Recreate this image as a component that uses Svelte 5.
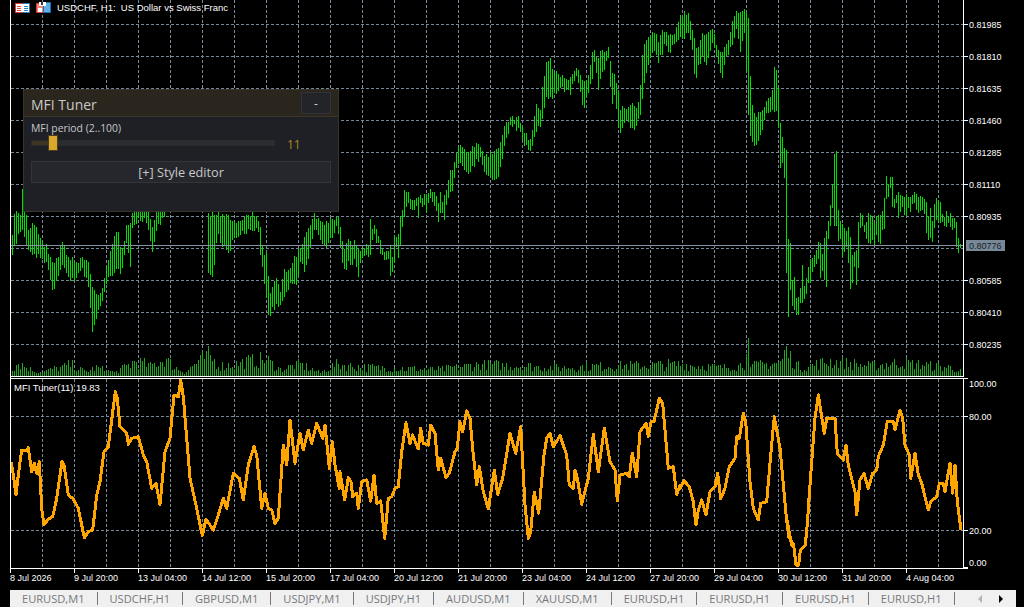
<script>
  // chart geometry
  const vGrid = Array.from({ length: 29 }, (_, i) => 42 + i * 32);
  const hGrid = [24, 56, 88, 120, 152, 184, 216, 248, 280, 312, 344];
  const subGrid = [416, 530];
  const prices = [
    ["0.81985", 24], ["0.81810", 56], ["0.81635", 88], ["0.81460", 120], ["0.81285", 152],
    ["0.81110", 184], ["0.80935", 216], ["0.80585", 280], ["0.80410", 312], ["0.80235", 344],
  ];
  const levels = [["100.00", 383, 378], ["80.00", 416, 416], ["20.00", 530, 530], ["0.00", 562, 567]];
  const dates = ["8 Jul 2026", "9 Jul 20:00", "13 Jul 04:00", "14 Jul 12:00", "15 Jul 20:00", "17 Jul 04:00",
    "20 Jul 12:00", "21 Jul 20:00", "23 Jul 04:00", "24 Jul 12:00", "27 Jul 20:00", "29 Jul 04:00",
    "30 Jul 12:00", "31 Jul 20:00", "4 Aug 04:00"];
  const tabs = ["EURUSD,M1", "USDCHF,H1", "GBPUSD,M1", "USDJPY,M1", "USDJPY,H1", "AUDUSD,M1", "XAUUSD,M1",
    "EURUSD,H1", "EURUSD,H1", "EURUSD,H1", "EURUSD,H1"];

  // seeded noise so the picture is the same on every load
  let seed = 7;
  function rnd() {
    seed = (seed * 16807) % 2147483647;
    return seed / 2147483647;
  }

  // [x, high, low] in page pixels
  const left = [[12,235,255],[14,214,245],[20,215,232],[22,189,230],[28,230,250],[33,220,255],[40,238,258],[47,248,263],[52,262,290],[57,258,280],[62,242,265],[68,257,277],[75,263,282],[82,257,268],[88,262,287],[92,287,332],[97,297,315],[103,283,297],[107,260,278],[113,240,277],[117,227,263],[121,257,278],[126,225,243],[130,223,267],[132,213,228],[138,205,218],[145,195,220],[152,227,252],[157,205,228],[163,195,216],[170,180,200],[180,190,205],[195,185,200],[206,190,212],[208,213,273],[213,213,277],[217,213,233],[227,213,255],[233,223,240],[245,217,233],[257,213,226],[260,227,255],[263,252,272],[267,258,310],[269,300,326],[272,287,307],[275,277,307],[280,292,305],[284,269,297],[290,268,283],[295,257,287],[300,248,262],[305,237,273],[310,225,248],[314,213,230],[318,218,235],[323,227,250],[330,218,238],[334,220,233]];
  const z12 = [[4,140,168],[10,140,192],[16,172,235],[22,213,278],[28,238,298],[34,220,300],[40,208,272],[46,212,285],[52,228,285],[58,210,268],[64,225,290],[70,238,322],[76,243,278],[82,235,265],[88,233,258],[94,222,255],[100,225,262],[106,148,255],[112,178,210],[118,165,193],[124,178,218],[130,198,220],[136,210,252],[142,238,255],[148,245,270],[154,243,270],[160,243,268],[166,228,317],[172,262,305],[178,198,278],[184,202,232],[190,192,263],[196,138,225],[202,120,172],[208,60,140],[214,65,112],[220,65,98],[226,88,118],[232,90,120],[238,90,120],[244,85,108],[250,82,145],[256,75,100],[262,85,110],[268,72,105],[274,72,128],[280,70,100],[286,58,85],[292,65,95],[298,65,108],[304,78,122],[310,100,155],[316,65,130],[322,95,128],[328,75,150],[334,60,105],[340,30,85],[346,0,65],[352,0,62]]
    .map(([z, a, b]) => [Math.round((335 + z / 3) / 2) * 2, 170 + a / 3, 170 + b / 3]);
  const mid = [[455,153,168],[460,145,163],[467,152,172],[475,143,163],[480,147,157],[487,157,180],[490,152,177],[497,148,180],[501,137,165],[505,123,143],[510,117,125],[517,118,128],[522,127,140],[528,140,150],[533,130,148],[535,100,132],[540,110,127],[543,78,113],[546,62,97],[550,58,97],[553,72,97],[560,77,88],[570,77,95],[573,70,80],[577,65,78],[583,80,108],[588,75,93],[591,57,83],[594,50,62],[598,58,90],[602,50,72],[608,47,58],[611,71,107],[615,78,92],[617,88,130],[620,110,133],[625,108,118],[632,103,128],[637,107,125],[640,85,115],[643,44,88],[648,37,65],[655,33,50],[658,42,63],[665,27,45],[668,35,52],[673,33,47],[678,22,40],[683,13,37],[688,13,33],[692,30,50],[695,45,82],[698,47,65],[702,33,57],[707,32,63],[713,25,42],[716,45,57],[722,52,78],[725,50,62],[730,32,47],[733,14,40],[737,13,25],[739,13,55],[744,9,33],[748,18,115],[751,103,143],[755,115,147],[760,112,135],[767,102,113],[772,90,110],[774,67,112],[777,72,112]];
  const z11 = [[0,123,168],[6,137,163],[13,148,178],[19,30,400],[25,298,530],[31,310,450],[37,420,498],[43,410,510],[49,475,525],[55,470,525],[61,445,490],[67,375,488],[73,438,478],[79,415,462],[85,380,430],[91,358,428],[97,355,395],[103,345,380],[109,330,372],[115,305,357],[121,310,415],[127,342,393],[133,295,420],[139,272,440],[145,243,297],[151,195,258],[157,133,205],[163,42,258],[169,33,258],[175,210,302],[181,243,298],[187,252,350],[193,265,337],[199,272,320],[205,262,370],[211,290,447],[217,345,430],[223,335,380],[229,330,435],[235,245,384],[241,220,264],[247,225,258],[253,255,275],[259,245,298],[265,218,308],[271,225,312],[277,232,300],[283,248,315],[289,228,285],[295,225,305],[301,225,312],[307,213,270],[313,175,268],[319,108,178],[325,133,172],[331,110,145],[337,110,200],[343,178,205],[349,165,190],[355,155,235],[361,165,215],[367,168,200],[373,170,225],[379,162,228],[385,170,205],[391,172,215],[397,165,192],[403,155,190],[409,162,210],[415,170,218],[421,168,212],[427,170,210],[433,178,222],[439,185,280],[445,228,300],[451,205,295],[457,243,305],[463,192,265],[469,175,240],[475,182,245],[481,185,250],[487,222,245],[493,232,258],[499,212,262],[505,228,250],[511,220,262],[517,235,270],[523,235,265],[529,245,320],[535,295,338],[541,312,322]]
    .map(([z, a, b]) => [Math.round((780 + z / 3) / 2) * 2, 140 + a / 3, 140 + b / 3]);
  // first three bars come from the upper crop, their values are already page based
  z11[0] = [780, 123, 168];
  z11[1] = [782, 137, 163];
  z11[2] = [784, 148, 178];
  const keys = [...left, ...z12, ...mid, ...z11];

  function bars() {
    let d = "";
    for (let x = 12; x <= 960; x += 2) {
      const i = keys.findIndex((k) => k[0] >= x);
      if (i < 0) break;
      const b = keys[i];
      const a = keys[Math.max(i - 1, 0)];
      let hi = b[1], lo = b[2];
      if (b[0] !== x && b[0] > a[0]) {
        const t = (x - a[0]) / (b[0] - a[0]);
        hi = a[1] + (b[1] - a[1]) * t + (rnd() - 0.5) * 7;
        lo = a[2] + (b[2] - a[2]) * t + (rnd() - 0.5) * 7;
      }
      d += `M${x + 0.5} ${Math.round(hi)}V${Math.round(Math.max(lo, hi + 4))}`;
    }
    return d;
  }

  const volKeys = [[12,10],[18,16],[30,8],[40,5],[60,10],[70,14],[85,5],[95,10],[115,4],[135,18],[150,12],[165,20],[175,10],[185,4],[195,15],[208,24],[220,12],[235,14],[250,18],[265,20],[280,8],[300,14],[320,4],[335,14],[360,11],[400,9],[440,8],[480,14],[520,12],[560,10],[600,12],[640,13],[680,14],[720,10],[745,14],[748,38],[751,12],[780,16],[786,30],[790,22],[800,10],[830,18],[870,12],[900,16],[920,14],[950,10],[960,6]];
  function volume() {
    let d = "";
    for (let x = 12; x <= 960; x += 2) {
      const i = volKeys.findIndex((k) => k[0] >= x);
      const b = volKeys[Math.max(i, 0)];
      const a = volKeys[Math.max(i - 1, 0)];
      const t = b[0] > a[0] ? (x - a[0]) / (b[0] - a[0]) : 0;
      const key = volKeys.some((k) => k[0] === x || k[0] === x + 1 || k[0] === x - 1) && b[1] > 25;
      const h = (a[1] + (b[1] - a[1]) * t) * (key ? 1 : 0.4 + rnd() * 0.85);
      d += `M${x + 0.5} ${Math.round(376 - Math.max(h, 2))}V376`;
    }
    return d;
  }

  // MFI line, traced in three crops, [x, y] pairs relative to the crop at 3x
  const mfiA = [34,262,40,300,48,360,55,300,65,225,80,225,85,218,95,290,103,265,110,295,118,260,125,400,132,450,145,432,158,425,170,370,186,260,192,270,205,360,220,372,235,400,253,488,265,470,278,465,290,360,300,320,312,230,325,215,335,135,346,50,352,70,360,155,380,175,385,208,395,190,415,185,430,240,440,260,455,340,468,325,480,388,495,230,510,190,522,60,535,65,542,15,550,65,570,310,590,400,607,482,618,432,640,465,655,420,670,370,680,400,700,295,718,310,730,375,745,270,762,215,770,240,785,400,795,355,805,400,815,405,825,445,835,430,850,210,860,270,870,135,885,265,900,175,910,225,925,165,935,205,950,145,968,190,975,150,988,280,997,200,1005,270,1018,340];
  const mfiB = [0,290,14,375,25,308,33,320,38,365,50,355,55,400,65,320,80,315,92,378,102,300,110,385,122,378,134,490,145,370,155,365,165,340,175,335,185,230,198,143,210,205,218,180,235,222,242,160,250,205,265,210,272,150,285,175,295,285,302,250,318,308,328,295,345,230,352,220,360,140,368,170,380,108,390,130,400,240,410,330,418,275,430,350,445,402,463,285,473,358,488,310,510,175,527,235,542,155,555,390,565,490,572,470,583,352,596,415,612,240,620,190,630,175,640,215,660,182,680,240,688,330,700,340,705,285,712,310,725,388,745,310,760,178,775,290,793,160,810,260,825,285,832,378,840,300,860,295,868,305,877,235,890,305,900,170,918,145,925,185,933,140,942,140,958,70,968,85,985,280,1000,275,1010,358,1020,330];
  const mfiC = [0,340,12,317,28,335,40,380,48,450,55,405,65,375,78,420,90,350,105,335,113,295,122,372,135,340,148,275,165,250,170,185,178,190,190,115,197,140,210,320,220,400,235,435,242,385,260,380,272,240,283,125,300,220,320,440,335,510];
  const mfiBottom = [825,0,830,50,845,75,852,135,860,135,865,90,880,75,887,0];
  const mfiD = [385,400,395,260,405,130,415,60,425,125,433,175,440,130,465,130,472,235,490,255,498,210,505,270,525,350,530,420,540,315,552,295,565,340,578,295,590,285,595,245,610,210,622,140,640,140,645,165,660,105,668,130,675,210,688,240,692,310,705,235,715,300,725,325,745,405,752,380,770,365,778,325,790,325,795,350,810,265,818,355,825,270,832,380,843,465];

  function toPts(arr, ox, oy) {
    const out = [];
    for (let i = 0; i < arr.length; i += 2) {
      out.push(`${(ox + arr[i] / 3).toFixed(1)},${(oy + arr[i + 1] / 3).toFixed(1)}`);
    }
    return out;
  }
  const mfi = [
    ...toPts(mfiA, 0, 375), ...toPts(mfiB, 340, 375), ...toPts(mfiC, 680, 375),
    ...toPts(mfiBottom, 512, 520), ...toPts(mfiD, 680, 375),
  ].join(" ");

  const barPath = bars();
  const volPath = volume();
</script>

<div class="terminal">
  <div class="chart">
    <svg width="1024" height="590" viewBox="0 0 1024 590">
      <g class="grid">
        {#each vGrid as x}
          <path d="M{x + 0.5} 0V376M{x + 0.5} 379V568" />
        {/each}
        {#each hGrid as y}
          <path d="M11 {y + 0.5}H963" />
        {/each}
        {#each subGrid as y}
          <path d="M11 {y + 0.5}H963" />
        {/each}
      </g>

      <path class="vol" d={volPath} />
      <path class="candles" d={barPath} />
      <path class="last" d="M11 245.5H963" />
      <polyline class="mfi" points={mfi} />

      <path class="axis" d="M10.5 0V568.5M963.5 0V376.5M11 376.5H963M10 378.5H968M963.5 378V568M10 568.5H968" />

      {#each prices as [label, y]}
        <path class="axis" d="M963 {y + 0.5}H968" />
        <text class="tick" x="969" y={y + 4}>{label}</text>
      {/each}
      <rect class="last-box" x="966" y="240" width="39" height="11" />
      <text class="tick dark" x="969" y="249">0.80776</text>

      {#each levels as [label, y, tick]}
        <path class="axis" d="M963 {tick + 0.5}H968" />
        <text class="tick" x="969" y={y + 4}>{label}</text>
      {/each}

      {#each dates as label, i}
        <path class="axis" d="M{10.5 + i * 64} 568V573" />
        <text class="tick" x={10 + i * 64} y="581">{label}</text>
      {/each}

      <text class="tick name" x="14" y="391">MFI Tuner(11) 19.83</text>

      <!-- symbol icons -->
      <g>
        <rect x="15.5" y="3.5" width="14" height="9" fill="#fff" stroke="#d83b2f" />
        <path d="M22.5 3.5H29.5V12.5H22.5" fill="none" stroke="#2a7fc4" />
        <path d="M17 6.5H21M17 8.5H21M17 10.5H21" stroke="#e8483c" />
        <path d="M24 6.5H28M24 8.5H28M24 10.5H28" stroke="#2a7fc4" />
        <path d="M36.5 3.5H43.5V12.5H36.5Z" fill="#f0857a" stroke="#d83b2f" />
        <path d="M43.5 2.5H50.5V12.5H43.5Z" fill="#5fb0e6" stroke="#1f6fb0" />
        <rect x="39" y="2" width="7" height="4" fill="#fff" />
        <rect x="41" y="2" width="2" height="3" fill="#333" />
        <rect x="38" y="8" width="4" height="4" fill="#fff" />
      </g>
      <text class="title" x="57" y="11">USDCHF, H1:  US Dollar vs Swiss Franc</text>
    </svg>

    <div class="panel">
      <div class="panel-head">
        <span class="panel-title">MFI Tuner</span>
        <button class="min">-</button>
      </div>
      <div class="panel-body">
        <div class="field-label">MFI period (2..100)</div>
        <div class="slider-row">
          <div class="track">
            <div class="fill"></div>
            <div class="thumb"></div>
          </div>
          <span class="value">11</span>
        </div>
        <button class="editor">[+] Style editor</button>
      </div>
    </div>
  </div>

  <div class="tabs">
    {#each tabs as t}
      <div class="tab">{t}</div>
    {/each}
    <div class="arrows">
      <span class="arrow off"></span>
      <span class="arrow on"></span>
    </div>
  </div>
</div>

<style>
  :global(body) {
    background: #000;
  }

  .terminal {
    width: 1024px;
    height: 607px;
    display: flex;
    flex-direction: column;
    background: #000;
    overflow: hidden;
  }

  .chart {
    position: relative;
    height: 590px;
  }

  svg {
    display: block;
  }

  .grid path {
    fill: none;
    stroke: #778899;
    stroke-width: 1;
    stroke-dasharray: 3 2;
    shape-rendering: crispEdges;
  }

  .vol {
    fill: none;
    stroke: #1ea81e;
    shape-rendering: crispEdges;
  }

  .candles {
    fill: none;
    stroke: #00e000;
    shape-rendering: crispEdges;
  }

  .last {
    stroke: #8494a4;
    shape-rendering: crispEdges;
  }

  .mfi {
    fill: none;
    stroke: #ffa500;
    stroke-width: 3;
    stroke-linejoin: round;
    shape-rendering: crispEdges;
  }

  .axis {
    fill: none;
    stroke: #fff;
    shape-rendering: crispEdges;
  }

  .tick {
    font-family: "Liberation Sans", sans-serif;
    font-size: 9px;
    fill: #fff;
  }

  .tick.name {
    font-size: 9.5px;
  }

  .tick.dark {
    fill: #1c2228;
  }

  .last-box {
    fill: #778899;
  }

  .title {
    font-family: "Liberation Sans", sans-serif;
    font-size: 9.5px;
    fill: #fff;
    white-space: pre;
  }

  .panel {
    position: absolute;
    left: 23px;
    top: 89px;
    width: 316px;
    height: 123px;
    box-sizing: border-box;
    background: #1e2026;
    border: 1px solid #37342a;
    font-family: "Open Sans", sans-serif;
    color: #c8c8c8;
  }

  .panel-head {
    height: 27px;
    box-sizing: border-box;
    display: flex;
    align-items: center;
    justify-content: space-between;
    padding: 0 7px;
    background: #2a251d;
    border-bottom: 1px solid #3a3628;
  }

  .panel-title {
    font-size: 14px;
    padding-top: 3px;
  }

  .min {
    width: 30px;
    height: 22px;
    padding: 0;
    background: #22242a;
    border: 1px solid #33343a;
    color: #c8c8c8;
    font-family: inherit;
    font-size: 12px;
  }

  .panel-body {
    padding: 4px 7px 0;
    display: flex;
    flex-direction: column;
  }

  .field-label {
    font-size: 10.4px;
    line-height: 14px;
  }

  .slider-row {
    display: flex;
    align-items: center;
    gap: 13px;
    height: 18px;
    margin-top: -1px;
  }

  .track {
    position: relative;
    width: 244px;
    height: 6px;
    background: #2c2d31;
    border: 1px solid #2a2a2c;
    box-sizing: border-box;
  }

  .fill {
    width: 18px;
    height: 100%;
    background: #3d3522;
  }

  .thumb {
    position: absolute;
    left: 16px;
    top: -6px;
    width: 10px;
    height: 16px;
    background: #d9a62e;
    border: 1px solid #4a3d20;
    box-sizing: border-box;
  }

  .value {
    font-size: 12px;
    color: #b08528;
    padding-top: 2px;
    margin-left: -1px;
  }

  .editor {
    margin-top: 9px;
    width: 300px;
    height: 22px;
    padding: 0;
    background: #26272c;
    border: 1px solid #33343a;
    color: #c8c8c8;
    font-family: inherit;
    font-size: 12.7px;
  }

  .tabs {
    margin-left: 10px;
    width: 1006px;
    flex: 1;
    display: flex;
    align-items: center;
    background: #f0f0f0;
    font-family: "Open Sans", sans-serif;
    font-size: 11.1px;
    color: #77787a;
  }

  .tab {
    padding: 0 12px;
    height: 13px;
    line-height: 13px;
    border-right: 1px solid #77787a;
    white-space: nowrap;
  }

  .arrows {
    margin-left: auto;
    display: flex;
    gap: 17px;
    padding-right: 13px;
  }

  .arrow {
    width: 0;
    height: 0;
    border-top: 4px solid transparent;
    border-bottom: 4px solid transparent;
  }

  .arrow.off {
    border-right: 4px solid #b4b4b4;
  }

  .arrow.on {
    border-left: 4px solid #000;
  }
</style>
